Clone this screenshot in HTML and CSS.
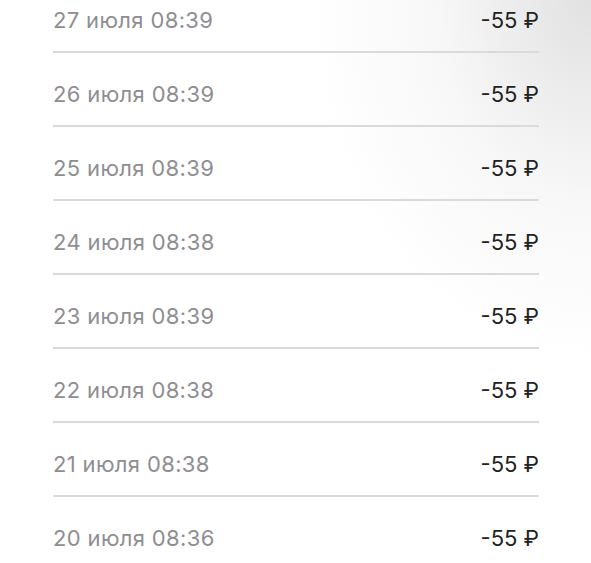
FILE: index.html
```html
<!DOCTYPE html>
<html lang="ru">
<head>
    <meta charset="UTF-8">
    <meta name="viewport" content="width=device-width, initial-scale=1.0">
    <title>Операции</title>
    <link rel="stylesheet" href="styles.css">
</head>
<body>
    <div class="list">
        <div class="row"><span class="date">27 июля 08:39</span><span class="amount">-55 ₽</span></div>
        <div class="row"><span class="date">26 июля 08:39</span><span class="amount">-55 ₽</span></div>
        <div class="row"><span class="date">25 июля 08:39</span><span class="amount">-55 ₽</span></div>
        <div class="row"><span class="date">24 июля 08:38</span><span class="amount">-55 ₽</span></div>
        <div class="row"><span class="date">23 июля 08:39</span><span class="amount">-55 ₽</span></div>
        <div class="row"><span class="date">22 июля 08:38</span><span class="amount">-55 ₽</span></div>
        <div class="row"><span class="date">21 июля 08:38</span><span class="amount">-55 ₽</span></div>
        <div class="row"><span class="date">20 июля 08:36</span><span class="amount">-55 ₽</span></div>
    </div>
</body>
</html>
```

FILE: styles.css
```css
html, body {
    height: 100%;
}
body {
    font-family: Inter, "Noto Sans", sans-serif;
    margin: 0;
    overflow: hidden;
    background-color: #fff;
    background-image:
        radial-gradient(ellipse 280px 360px at 100% 0%, rgba(205,205,205,0.6), rgba(230,230,230,0.3) 55%, rgba(255,255,255,0) 100%);
}
.list {
    margin: -21px 52px 0 53px;
}
.row {
    display: flex;
    justify-content: space-between;
    align-items: center;
    height: 74px;
    padding-top: 9px;
    box-sizing: border-box;
    border-bottom: 2px solid #dadadc;
}
.date {
    font-size: 22px;
    letter-spacing: 0.35px;
    color: #8e8e92;
}
.amount {
    font-size: 22px;
    color: #222;
}
```
